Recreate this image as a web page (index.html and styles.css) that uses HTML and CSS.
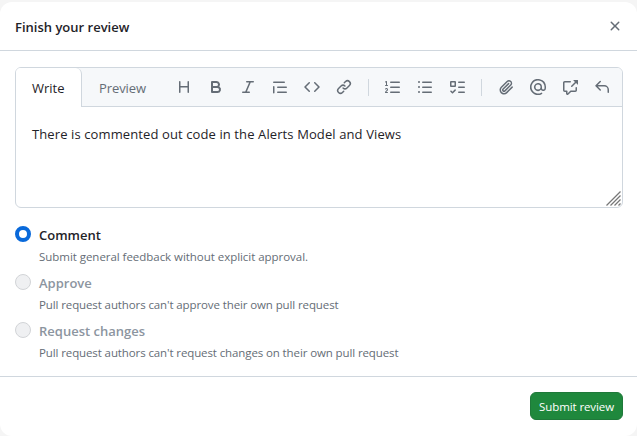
FILE: index.html
```html
<!DOCTYPE html>
<html lang="en">
<head>
<meta charset="utf-8">
<title>Finish your review</title>
<link rel="stylesheet" href="styles.css">
</head>
<body>
<form class="dialog">
  <header class="dialog-header">
    <h1 class="title">Finish your review</h1>
    <svg class="icon" viewBox="0 0 16 16"><path d="M3.72 3.72a.75.75 0 0 1 1.06 0L8 6.94l3.22-3.22a.75.75 0 0 1 1.06 1.06L9.06 8l3.22 3.22a.75.75 0 0 1-1.06 1.06L8 9.06l-3.22 3.22a.75.75 0 0 1-1.06-1.06L6.94 8 3.72 4.78a.75.75 0 0 1 0-1.06Z"/></svg>
  </header>
  <main class="dialog-body">
    <section class="editor">
      <div class="editor-bar">
        <div class="tab tab-active">Write</div>
        <div class="tab tab-preview">Preview</div>
        <div class="tools">
          <svg class="icon" viewBox="0 0 16 16"><path d="M3.75 2a.75.75 0 0 1 .75.75V7h7V2.75a.75.75 0 0 1 1.5 0v10.5a.75.75 0 0 1-1.5 0V8.5h-7v4.75a.75.75 0 0 1-1.5 0V2.75A.75.75 0 0 1 3.75 2Z"/></svg>
          <svg class="icon" viewBox="0 0 16 16"><path d="M4 2h4.5a3.501 3.501 0 0 1 2.852 5.53A3.499 3.499 0 0 1 9.5 14H4a1 1 0 0 1-1-1V3a1 1 0 0 1 1-1Zm1 7v3h4.5a1.5 1.5 0 0 0 0-3Zm3.5-2a1.5 1.5 0 0 0 0-3H5v3Z"/></svg>
          <svg class="icon" viewBox="0 0 16 16"><path d="M6 2.75A.75.75 0 0 1 6.75 2h6.5a.75.75 0 0 1 0 1.5h-2.505l-3.858 9H9.25a.75.75 0 0 1 0 1.5h-6.5a.75.75 0 0 1 0-1.5h2.505l3.858-9H6.75A.75.75 0 0 1 6 2.75Z"/></svg>
          <svg class="icon" viewBox="0 0 16 16"><path d="M1.75 2.5h10.5a.75.75 0 0 1 0 1.5H1.75a.75.75 0 0 1 0-1.5Zm4 5h8.5a.75.75 0 0 1 0 1.5h-8.5a.75.75 0 0 1 0-1.5Zm0 5h8.5a.75.75 0 0 1 0 1.5h-8.5a.75.75 0 0 1 0-1.5ZM2.5 7.75v6a.75.75 0 0 1-1.5 0v-6a.75.75 0 0 1 1.5 0Z"/></svg>
          <svg class="icon" viewBox="0 0 16 16"><path d="m11.28 3.22 4.25 4.25a.75.75 0 0 1 0 1.06l-4.25 4.25a.749.749 0 0 1-1.275-.326.749.749 0 0 1 .215-.734L13.94 8l-3.72-3.72a.749.749 0 0 1 .326-1.275.749.749 0 0 1 .734.215Zm-6.56 0a.751.751 0 0 1 1.042.018.751.751 0 0 1 .018 1.042L2.06 8l3.72 3.72a.749.749 0 0 1-.326 1.275.749.749 0 0 1-.734-.215L.47 8.53a.75.75 0 0 1 0-1.06Z"/></svg>
          <svg class="icon" viewBox="0 0 16 16"><path d="m7.775 3.275 1.25-1.25a3.5 3.5 0 1 1 4.95 4.95l-2.5 2.5a3.5 3.5 0 0 1-4.95 0 .751.751 0 0 1 .018-1.042.751.751 0 0 1 1.042-.018 1.998 1.998 0 0 0 2.83 0l2.5-2.5a2.002 2.002 0 0 0-2.83-2.83l-1.25 1.25a.751.751 0 0 1-1.042-.018.751.751 0 0 1-.018-1.042Zm-4.69 9.64a1.998 1.998 0 0 0 2.83 0l1.25-1.25a.751.751 0 0 1 1.042.018.751.751 0 0 1 .018 1.042l-1.25 1.25a3.5 3.5 0 1 1-4.95-4.95l2.5-2.5a3.5 3.5 0 0 1 4.95 0 .751.751 0 0 1-.018 1.042.751.751 0 0 1-1.042.018 1.998 1.998 0 0 0-2.83 0l-2.5 2.5a1.998 1.998 0 0 0 0 2.83Z"/></svg>
          <i class="divider"></i>
          <svg class="icon" viewBox="0 0 16 16"><path d="M5 3.25a.75.75 0 0 1 .75-.75h8.5a.75.75 0 0 1 0 1.5h-8.5A.75.75 0 0 1 5 3.25Zm0 5a.75.75 0 0 1 .75-.75h8.5a.75.75 0 0 1 0 1.5h-8.5A.75.75 0 0 1 5 8.25Zm0 5a.75.75 0 0 1 .75-.75h8.5a.75.75 0 0 1 0 1.5h-8.5a.75.75 0 0 1-.75-.75ZM.924 10.32a.5.5 0 0 1-.851-.525l.001-.001.001-.002.002-.004.007-.011c.097-.144.215-.273.348-.384.228-.19.588-.392 1.068-.392.468 0 .858.181 1.126.484.259.294.377.673.377 1.038 0 .987-.686 1.495-1.156 1.845l-.047.035c-.303.225-.522.4-.654.597h1.357a.5.5 0 0 1 0 1H.5a.5.5 0 0 1-.5-.5c0-1.005.692-1.52 1.167-1.875l.035-.025c.531-.396.8-.625.8-1.078a.57.57 0 0 0-.128-.376C1.806 10.068 1.695 10 1.5 10a.658.658 0 0 0-.429.163.835.835 0 0 0-.144.153ZM2.003 2.5V6h.503a.5.5 0 0 1 0 1H.5a.5.5 0 0 1 0-1h.503V3.308l-.28.14a.5.5 0 0 1-.446-.895l1.003-.5a.5.5 0 0 1 .723.447Z"/></svg>
          <svg class="icon" viewBox="0 0 16 16"><path d="M5.75 2.5h8.5a.75.75 0 0 1 0 1.5h-8.5a.75.75 0 0 1 0-1.5Zm0 5h8.5a.75.75 0 0 1 0 1.5h-8.5a.75.75 0 0 1 0-1.5Zm0 5h8.5a.75.75 0 0 1 0 1.5h-8.5a.75.75 0 0 1 0-1.5ZM2 14a1 1 0 1 1 0-2 1 1 0 0 1 0 2Zm1-6a1 1 0 1 1-2 0 1 1 0 0 1 2 0ZM2 4a1 1 0 1 1 0-2 1 1 0 0 1 0 2Z"/></svg>
          <svg class="icon" viewBox="0 0 16 16"><path fill-rule="evenodd" d="M2 2h4a1 1 0 0 1 1 1v4a1 1 0 0 1-1 1H2a1 1 0 0 1-1-1V3a1 1 0 0 1 1-1Zm.5 1.5v3h3v-3ZM6.655 10.595a.75.75 0 0 1 0 1.06L4.03 14.28a.75.75 0 0 1-1.06 0l-1.5-1.5a.749.749 0 0 1 .326-1.275.749.749 0 0 1 .734.215l.97.97 2.095-2.095a.75.75 0 0 1 1.06 0ZM9.75 2.5h5.5a.75.75 0 0 1 0 1.5h-5.5a.75.75 0 0 1 0-1.5Zm0 5h5.5a.75.75 0 0 1 0 1.5h-5.5a.75.75 0 0 1 0-1.5Zm0 5h5.5a.75.75 0 0 1 0 1.5h-5.5a.75.75 0 0 1 0-1.5Z"/></svg>
          <i class="divider"></i>
          <svg class="icon" viewBox="0 0 16 16"><path d="M12.212 3.02a1.753 1.753 0 0 0-2.478.003l-5.83 5.83a3.007 3.007 0 0 0-.88 2.127c0 .795.315 1.551.88 2.116.567.567 1.333.89 2.126.89.79 0 1.548-.321 2.116-.89l5.48-5.48a.75.75 0 0 1 1.061 1.06l-5.48 5.48a4.492 4.492 0 0 1-3.177 1.33c-1.2 0-2.345-.487-3.187-1.33a4.483 4.483 0 0 1-1.32-3.177c0-1.195.475-2.341 1.32-3.186l5.83-5.83a3.25 3.25 0 0 1 5.553 2.297c0 .863-.343 1.691-.953 2.301L7.439 12.39c-.375.377-.884.59-1.416.593a1.998 1.998 0 0 1-1.412-.593 1.992 1.992 0 0 1 0-2.828l5.48-5.48a.751.751 0 0 1 1.042.018.751.751 0 0 1 .018 1.042l-5.48 5.48a.492.492 0 0 0 0 .707.499.499 0 0 0 .352.154.51.51 0 0 0 .356-.154l5.833-5.827a1.755 1.755 0 0 0 0-2.481Z"/></svg>
          <svg class="icon" viewBox="0 0 16 16"><path d="M4.75 2.37a6.501 6.501 0 0 0 6.5 11.26.75.75 0 0 1 .75 1.298A7.999 7.999 0 0 1 .989 4.148 8 8 0 0 1 16 7.75v1.5a2.75 2.75 0 0 1-5.072 1.475 3.999 3.999 0 0 1-6.65-4.19A4 4 0 0 1 12 8v1.25a1.25 1.25 0 0 0 2.5 0V7.867a6.5 6.5 0 0 0-9.75-5.496ZM10.5 8a2.5 2.5 0 1 0-5 0 2.5 2.5 0 0 0 5 0Z"/></svg>
          <svg class="icon" viewBox="0 0 16 16"><path d="M2.75 3.5a.25.25 0 0 0-.25.25v7.5c0 .138.112.25.25.25h2a.75.75 0 0 1 .75.75v2.19l2.72-2.72a.749.749 0 0 1 .53-.22h4.5a.25.25 0 0 0 .25-.25v-2.5a.75.75 0 0 1 1.5 0v2.5A1.75 1.75 0 0 1 13.25 13H9.06l-2.573 2.573A1.458 1.458 0 0 1 4 14.543V13H2.75A1.75 1.75 0 0 1 1 11.25v-7.5C1 2.784 1.784 2 2.75 2h5.5a.75.75 0 0 1 0 1.5ZM16 1.25v4.146a.25.25 0 0 1-.427.177L14.03 4.03l-3.75 3.75a.749.749 0 0 1-1.275-.326.749.749 0 0 1 .215-.734l3.75-3.75-1.543-1.543A.25.25 0 0 1 11.604 1h4.146a.25.25 0 0 1 .25.25Z"/></svg>
          <svg class="icon" viewBox="0 0 16 16"><path d="M6.78 1.97a.75.75 0 0 1 0 1.06L3.81 6h6.44A4.75 4.75 0 0 1 15 10.75v2.5a.75.75 0 0 1-1.5 0v-2.5a3.25 3.25 0 0 0-3.25-3.25H3.81l2.97 2.97a.749.749 0 0 1-.326 1.275.749.749 0 0 1-.734-.215L1.47 7.28a.75.75 0 0 1 0-1.06l4.25-4.25a.75.75 0 0 1 1.06 0Z"/></svg>
        </div>
      </div>
      <div class="comment-box">
        There is commented out code in the Alerts Model and Views
        <svg class="resize" viewBox="0 0 15 15"><path d="M.5 14.5l14-14M4.5 14.5l10-10M8.5 14.5l6-6M12.5 14.5l2-2"/></svg>
      </div>
    </section>
    <section class="options">
      <div class="option">
        <i class="radio radio-on"></i>
        <div>
          <div class="label">Comment</div>
          <div class="note note-wide">Submit general feedback without explicit approval.</div>
        </div>
      </div>
      <div class="option option-disabled">
        <i class="radio"></i>
        <div>
          <div class="label">Approve</div>
          <div class="note">Pull request authors can't approve their own pull request</div>
        </div>
      </div>
      <div class="option option-disabled">
        <i class="radio"></i>
        <div>
          <div class="label">Request changes</div>
          <div class="note">Pull request authors can't request changes on their own pull request</div>
        </div>
      </div>
    </section>
  </main>
  <footer class="dialog-footer">
    <button type="button" class="submit">Submit review</button>
  </footer>
</form>
</body>
</html>
```
FILE: styles.css
```css
* { box-sizing: border-box; }
body {
  margin: 0;
  height: 436px;
  padding-top: 2px;
  background: #f5f5f5;
  font-family: "Open Sans", "Noto Sans", sans-serif;
  font-size: 13px;
  color: #1f2328;
  overflow: hidden;
}
.dialog {
  display: flex;
  flex-direction: column;
  height: 434px;
  background: #fff;
  border-radius: 12px;
}
.dialog-header {
  display: flex;
  align-items: center;
  justify-content: space-between;
  height: 49px;
  padding: 0 14px 0 15px;
  border-bottom: 1px solid #d0d7de;
}
.title { margin: 2px 0 0; font-size: 13px; font-weight: 600; line-height: 20px; }
.icon { flex: none; display: block; width: 16px; height: 16px; fill: #656d76; }
.dialog-body { flex: 1; padding: 16px 14px 0 15px; }
.editor { height: 141px; border: 1px solid #d0d7de; border-radius: 6px; }
.editor-bar {
  display: flex;
  height: 39px;
  background: #f6f8fa;
  border-bottom: 1px solid #d0d7de;
  border-radius: 5px 5px 0 0;
}
.tab { padding: 10px 16px 0; line-height: 20px; color: #656d76; white-space: nowrap; }
.tab-active {
  width: 66px;
  height: 39px;
  color: #1f2328;
  background: #fff;
  border-right: 1px solid #d0d7de;
  border-radius: 5px 6px 0 0;
}
.tab-preview { padding-left: 17px; letter-spacing: -0.1px; }
.tools {
  flex: 1;
  display: flex;
  align-items: center;
  justify-content: flex-end;
  height: 38px;
  gap: 16px;
  padding-right: 12px;
}
.divider { width: 1px; height: 17px; background: #d0d7de; }
.comment-box {
  position: relative;
  height: 100px;
  padding: 17px 16px;
  line-height: 20px;
  letter-spacing: 0.107px;
  white-space: nowrap;
}
.resize {
  position: absolute;
  right: 1px;
  bottom: 1px;
  width: 15px;
  height: 15px;
  fill: none;
  stroke: #777;
  stroke-width: 1.3;
}
.options { padding-top: 17px; }
.option { display: flex; gap: 8px; height: 48px; }
.radio {
  flex: none;
  width: 16px;
  height: 16px;
  margin-top: 1px;
  border: 1px solid #d2d4d7;
  border-radius: 50%;
  background: #eff0f2;
}
.radio-on { border: 4px solid #0969da; background: #fff; }
.label { font-weight: 550; line-height: 20px; white-space: nowrap; }
.option-disabled .label { color: #8c959f; }
.note {
  margin-top: 3px;
  font-size: 11.5px;
  line-height: 18px;
  letter-spacing: -0.11px;
  color: #656d76;
  white-space: nowrap;
}
.note-wide { letter-spacing: -0.04px; }
.dialog-footer {
  display: flex;
  justify-content: flex-end;
  height: 60px;
  padding: 15px 14px 0;
  border-top: 1px solid #d0d7de;
}
.submit {
  width: 93px;
  height: 28px;
  padding: 1px 0 0;
  border: 1px solid #1f793a;
  border-radius: 6px;
  background: #1f883d;
  color: #fff;
  font: 11.5px "Open Sans", "Noto Sans", sans-serif;
  letter-spacing: -0.1px;
  white-space: nowrap;
}
```
